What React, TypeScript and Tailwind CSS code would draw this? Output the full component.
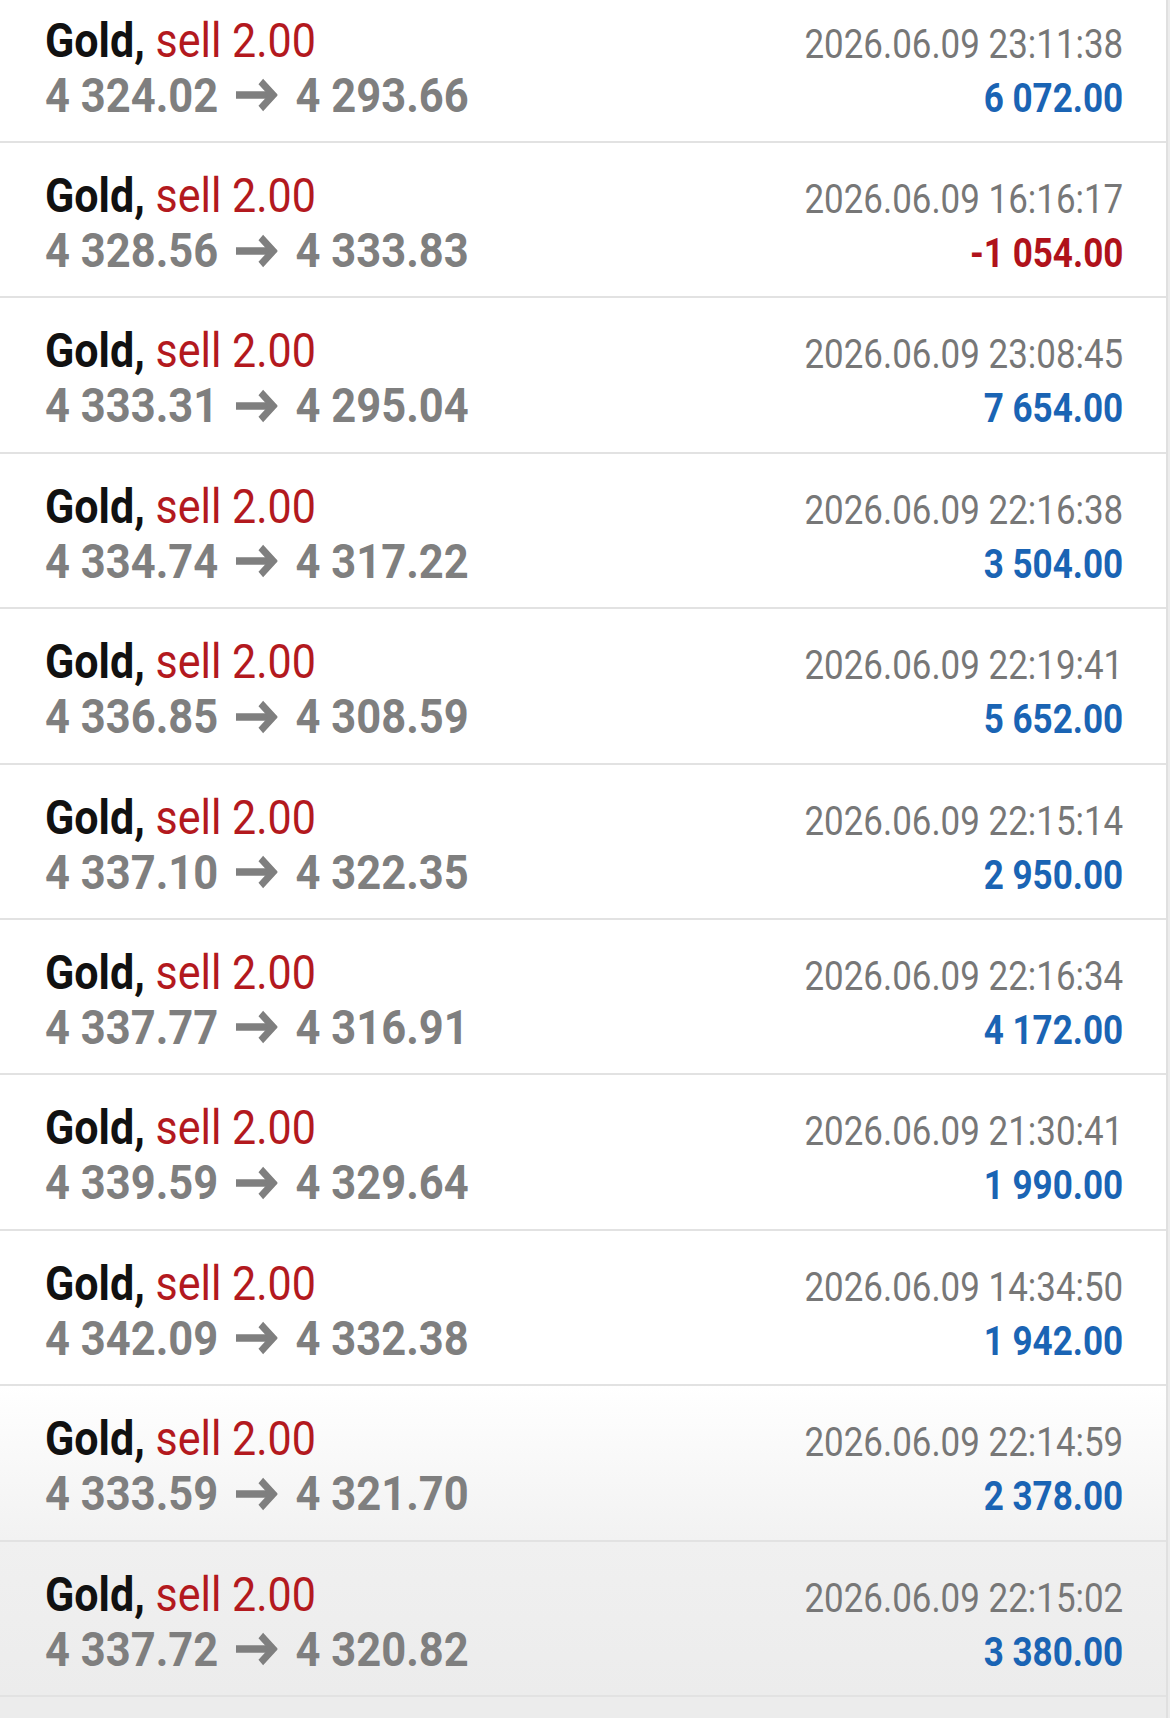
import React from "react";

type Trade = { open: string; close: string; time: string; profit: string; neg?: boolean };

const trades: Trade[] = [
  { open: "4 324.02", close: "4 293.66", time: "2026.06.09 23:11:38", profit: "6 072.00" },
  { open: "4 328.56", close: "4 333.83", time: "2026.06.09 16:16:17", profit: "-1 054.00", neg: true },
  { open: "4 333.31", close: "4 295.04", time: "2026.06.09 23:08:45", profit: "7 654.00" },
  { open: "4 334.74", close: "4 317.22", time: "2026.06.09 22:16:38", profit: "3 504.00" },
  { open: "4 336.85", close: "4 308.59", time: "2026.06.09 22:19:41", profit: "5 652.00" },
  { open: "4 337.10", close: "4 322.35", time: "2026.06.09 22:15:14", profit: "2 950.00" },
  { open: "4 337.77", close: "4 316.91", time: "2026.06.09 22:16:34", profit: "4 172.00" },
  { open: "4 339.59", close: "4 329.64", time: "2026.06.09 21:30:41", profit: "1 990.00" },
  { open: "4 342.09", close: "4 332.38", time: "2026.06.09 14:34:50", profit: "1 942.00" },
  { open: "4 333.59", close: "4 321.70", time: "2026.06.09 22:14:59", profit: "2 378.00" },
  { open: "4 337.72", close: "4 320.82", time: "2026.06.09 22:15:02", profit: "3 380.00" },
];

const bgs = [
  "bg-white",
  "bg-white",
  "bg-white",
  "bg-white",
  "bg-white",
  "bg-white",
  "bg-white",
  "bg-white",
  "bg-white",
  "bg-gradient-to-b from-white to-[#f2f2f2]",
  "bg-gradient-to-b from-[#f0f0f0] to-[#ececec]",
];

function Arrow() {
  return (
    <svg
      width="47"
      height="34"
      viewBox="0 0 47 34"
      className="mx-[20px] inline-block align-baseline"
      fill="none"
      stroke="#7f7f7f"
      strokeWidth="7.5"
    >
      <path d="M0 17 H41" />
      <path d="M28 3.5 L42 17 L28 30.5" strokeLinejoin="miter" />
    </svg>
  );
}

function Row({ t, bg }: { t: Trade; bg: string }) {
  return (
    <div className={`flex h-[155.4px] justify-between border-b-2 border-[#e2e2e2] pl-[45px] pr-[43px] ${bg}`}>
      <div className="flex flex-col pt-[25px]">
        <div className="origin-left scale-x-[0.878] whitespace-nowrap text-[49px] leading-[55px]">
          <span className="font-bold text-[#111111]">Gold,</span>{" "}
          <span className="text-[#b3191e]">sell 2.00</span>
        </div>
        <div className="flex origin-left scale-x-[0.888] items-center whitespace-nowrap text-[49px] font-bold leading-[55px] text-[#7f7f7f]">
          <span>{t.open}</span>
          <Arrow />
          <span>{t.close}</span>
        </div>
      </div>
      <div className="flex flex-col items-end pt-[29px]">
        <div className="origin-right scale-x-[0.852] whitespace-nowrap text-[41px] leading-[54px] text-[#777777]">
          {t.time}
        </div>
        <div
          className={`origin-right scale-x-[0.855] whitespace-nowrap text-[41px] font-bold leading-[54px] ${
            t.neg ? "text-[#b0121b]" : "text-[#1a64b4]"
          }`}
        >
          {t.profit}
        </div>
      </div>
    </div>
  );
}

export default function App() {
  return (
    <div
      className="h-[1718px] w-[1170px] overflow-hidden bg-[#ececec]"
      style={{ fontFamily: "Roboto, 'Liberation Sans', sans-serif" }}
    >
      <div className="-mt-[12.4px] w-[1168px] border-r-2 border-[#e0e0e0]">
        {trades.map((t, i) => (
          <Row key={i} t={t} bg={bgs[i]} />
        ))}
        <div className="h-[40px] bg-[#ececec]" />
      </div>
    </div>
  );
}
